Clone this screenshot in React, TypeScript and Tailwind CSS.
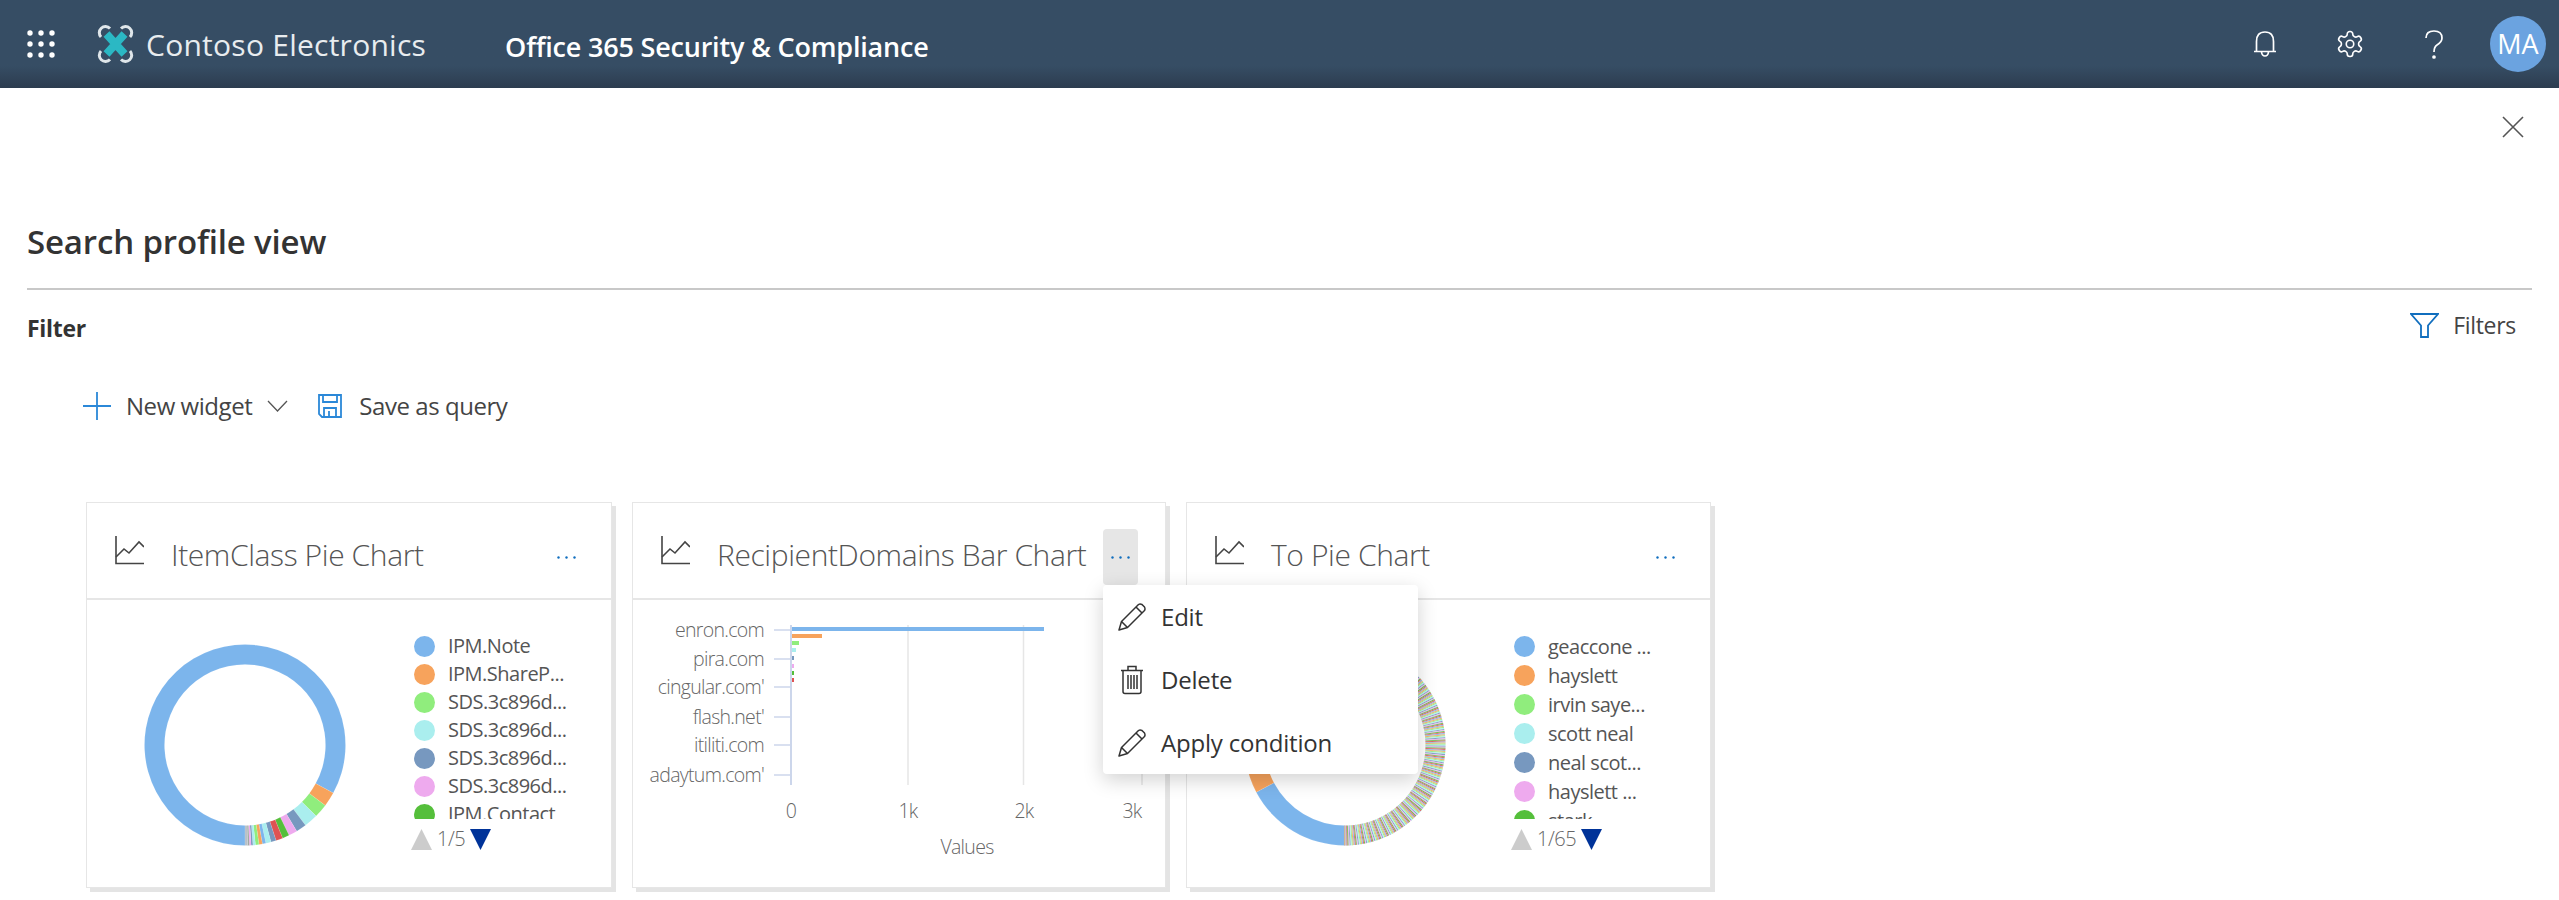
const palette = ["#7cb5ec", "#f7a35c", "#90ed7d", "#aaeeee", "#7798bf", "#eeaaee", "#55bf3b", "#df5353"]

function polar(cx: number, cy: number, r: number, deg: number) {
  const a = ((deg - 90) * Math.PI) / 180
  return [cx + r * Math.cos(a), cy + r * Math.sin(a)]
}

function slicePath(from: number, to: number) {
  const [x1, y1] = polar(101, 101, 100.5, from)
  const [x2, y2] = polar(101, 101, 100.5, to)
  const [x3, y3] = polar(101, 101, 80.5, to)
  const [x4, y4] = polar(101, 101, 80.5, from)
  const large = to - from > 180 ? 1 : 0
  return `M${x1} ${y1}A100.5 100.5 0 ${large} 1 ${x2} ${y2}L${x3} ${y3}A80.5 80.5 0 ${large} 0 ${x4} ${y4}Z`
}

type Slice = { from: number; to: number; color: string }

const itemClassSlices: Slice[] = [
  { from: 180, to: 478.6, color: "#7cb5ec" },
  { from: 478.6, to: 487, color: "#f7a35c" },
  { from: 487, to: 495, color: "#90ed7d" },
  { from: 495, to: 503, color: "#aaeeee" },
  { from: 503, to: 509, color: "#7798bf" },
  { from: 509, to: 514, color: "#eeaaee" },
  { from: 514, to: 518, color: "#55bf3b" },
  { from: 518, to: 522, color: "#df5353" },
  { from: 522, to: 525, color: "#7798bf" },
  { from: 525, to: 528, color: "#aaeeee" },
  { from: 528, to: 530, color: "#7cb5ec" },
  { from: 530, to: 532, color: "#f7a35c" },
  { from: 532, to: 534, color: "#90ed7d" },
  { from: 534, to: 535.5, color: "#aaeeee" },
  { from: 535.5, to: 536.5, color: "#7798bf" },
  { from: 536.5, to: 537.5, color: "#eeaaee" },
  { from: 537.5, to: 538.5, color: "#a0a8a0" },
  { from: 538.5, to: 540, color: "#b8c0c8" },
]

const toSlices: Slice[] = [
  { from: 180, to: 242, color: "#7cb5ec" },
  { from: 242, to: 262, color: "#f7a35c" },
]
for (let i = 0; i < 278 / 0.6; i++) {
  const from = 262 + i * 0.6
  toSlices.push({ from, to: from + 0.6, color: palette[(i + 2) % palette.length] })
}

function Donut({ slices }: { slices: Slice[] }) {
  return (
    <svg width="202" height="202" viewBox="0 0 202 202" className="shrink-0">
      {slices.map((s, i) => (
        <path key={i} d={slicePath(s.from, s.to)} fill={s.color} stroke="#ffffff" strokeWidth="0.1" />
      ))}
    </svg>
  )
}

function ChartIcon() {
  return (
    <svg width="29" height="29" viewBox="0 0 29 29" fill="none" stroke="#444444" strokeWidth="1.6" className="shrink-0">
      <path d="M1 0V27.5H29" />
      <path d="M1 21L9 13L14 17L24 6L29 11" />
    </svg>
  )
}

function Pencil() {
  return (
    <svg width="28" height="28" viewBox="0 0 28 28" fill="none" stroke="#333333" strokeWidth="1.5" strokeLinejoin="round" className="shrink-0">
      <path d="M1 27L3.5 18.5L20.5 1.5Q22 0.5 24 1.5L26.5 4Q27.5 6 26.5 7.5L9.5 24.5Z" />
      <path d="M3.5 18.5L9.5 24.5M18 4L24 10" />
    </svg>
  )
}

function Trash() {
  return (
    <svg width="28" height="30" viewBox="0 0 28 30" fill="none" stroke="#333333" strokeWidth="1.5" className="shrink-0">
      <path d="M3 5.5H25M10 5V1.5H18V5M5 6V26.5Q5 28.5 7 28.5H21Q23 28.5 23 26.5V6" />
      <path d="M10 10V24M13 10V24M16 10V24M19 10V24" />
    </svg>
  )
}

function Ellipsis() {
  return (
    <svg width="19" height="3" viewBox="0 0 19 3" fill="#106ebe">
      <circle cx="1.5" cy="1.5" r="1.2" />
      <circle cx="9.5" cy="1.5" r="1.2" />
      <circle cx="17.5" cy="1.5" r="1.2" />
    </svg>
  )
}

function CardHeader({ title, active }: { title: string; active?: boolean }) {
  return (
    <div className="flex h-[97px] items-center border-b-2 border-[#e6e6e6] pl-[28px]">
      <ChartIcon />
      <div className="ml-[27px] mt-[8px] flex-1 text-[30px] font-light tracking-[-0.4px] whitespace-nowrap text-[#555555]">{title}</div>
      <div className={"mr-[27px] mt-[13px] flex h-[56px] w-[35px] items-center justify-center rounded-sm " + (active ? "bg-[#e6e6e6]" : "")}>
        <Ellipsis />
      </div>
    </div>
  )
}

function Legend({ items, pager, pitch }: { items: string[]; pager: string; pitch: string }) {
  return (
    <div className="flex flex-col">
      <div className="h-[184px] overflow-hidden">
        <div className="-mt-[3px]">
          {items.map((t, i) => (
            <div key={t} className={"flex items-center gap-[13px] " + pitch}>
              <span className="h-[21px] w-[21px] shrink-0 rounded-full" style={{ backgroundColor: palette[i] }} />
              <span className="text-[20px] tracking-[-0.5px] whitespace-nowrap text-[#555555]">{t}</span>
            </div>
          ))}
        </div>
      </div>
      <div className="-ml-[3px] mt-[5px] flex items-center gap-[5px] text-[20px] font-light text-[#666666]">
        <svg width="21" height="21" viewBox="0 0 21 21"><path d="M10.5 0L21 21H0Z" fill="#cccccc" /></svg>
        <span className="tracking-[-0.5px]">{pager}</span>
        <svg width="21" height="21" viewBox="0 0 21 21"><path d="M0 0H21L10.5 21Z" fill="#003399" /></svg>
      </div>
    </div>
  )
}

function PieCard({ title, slices, items, pager, pitch, width }: { title: string; slices: Slice[]; items: string[]; pager: string; pitch: string; width: string }) {
  return (
    <div className={"h-[386px] border border-[#e6e6e6] bg-white shadow-[4px_4px_0_#e4e4e4] " + width}>
      <CardHeader title={title} />
      <div className="flex items-start pl-[57px] pt-[35px]">
        <div className="mt-[9px]">
          <Donut slices={slices} />
        </div>
        <div className="ml-[68px]">
          <Legend items={items} pager={pager} pitch={pitch} />
        </div>
      </div>
    </div>
  )
}

const domains = [
  { label: "enron.com", y: 631 },
  { label: "pira.com", y: 660 },
  { label: "cingular.com'", y: 688 },
  { label: "flash.net'", y: 718 },
  { label: "itiliti.com", y: 746 },
  { label: "adaytum.com'", y: 776 },
]

const bars = [
  { y: 628, w: 252, c: "#7cb5ec" },
  { y: 635, w: 30, c: "#f7a35c" },
  { y: 642, w: 7, c: "#90ed7d" },
  { y: 649, w: 4, c: "#aaeeee" },
  { y: 657, w: 2, c: "#7798bf" },
  { y: 665, w: 2, c: "#eeaaee" },
  { y: 672, w: 2, c: "#55bf3b" },
  { y: 679, w: 2, c: "#df5353" },
]

function BarChart() {
  return (
    <svg width="534" height="288" viewBox="632 601 534 288" className="block" fontFamily="'Open Sans', sans-serif" fontWeight="300" fontSize="19.5" fill="#666666" letterSpacing="-0.7">
      {[907, 1022.5, 1141].map((x) => (
        <line key={x} x1={x} x2={x} y1="626" y2="786" stroke="#e6e6e6" strokeWidth="1.5" />
      ))}
      <line x1="790" x2="790" y1="626" y2="786" stroke="#ccd6eb" strokeWidth="2" />
      {domains.map((d) => (
        <g key={d.label}>
          <line x1="773" x2="790" y1={d.y} y2={d.y} stroke="#ccd6eb" strokeWidth="1.5" />
          <text x="763" y={d.y + 7} textAnchor="end">{d.label}</text>
        </g>
      ))}
      {bars.map((b) => (
        <rect key={b.y} x="791" y={b.y} width={b.w} height="4" fill={b.c} />
      ))}
      <text x="790" y="819" textAnchor="middle">0</text>
      <text x="907" y="819" textAnchor="middle">1k</text>
      <text x="1023" y="819" textAnchor="middle">2k</text>
      <text x="1131" y="819" textAnchor="middle">3k</text>
      <text x="966" y="855" textAnchor="middle">Values</text>
    </svg>
  )
}

function MenuItem({ icon, label }: { icon: React.ReactNode; label: string }) {
  return (
    <div className="flex h-[63px] items-center gap-[15px] pl-[15px] text-[24px] tracking-[-0.2px] text-[#333333]">
      {icon}
      <span>{label}</span>
    </div>
  )
}

export default function App() {
  return (
    <div className="h-[900px] w-[2559px] overflow-hidden bg-white font-['Open_Sans',sans-serif] text-[#333333]">
      <header className="flex h-[88px] items-center bg-gradient-to-b from-[#364d64] from-75% to-[#2c3c4f] text-white">
        <svg width="28" height="28" viewBox="0 0 28 28" fill="#ffffff" className="ml-[27px]">
          {[3, 14, 25].flatMap((y) => [3, 14, 25].map((x) => <circle key={`${x}-${y}`} cx={x} cy={y} r="2.7" />))}
        </svg>
        <svg width="37" height="38" viewBox="0 0 37 38" fill="none" className="ml-[42px]">
          <g stroke="#dfe6ea" strokeWidth="3">
            <path d="M4 12A6 6 0 1 1 13 3.5" />
            <path d="M33 12A6 6 0 1 0 24 3.5" />
            <path d="M4 26A6 6 0 1 0 13 34.5" />
            <path d="M33 26A6 6 0 1 1 24 34.5" />
          </g>
          <path d="M9.5 9L27.5 29M27.5 9L9.5 29" stroke="#2bb8c4" strokeWidth="8" />
        </svg>
        <div className="ml-[12px] text-[30px] font-medium tracking-[0.25px] text-[#e8ecef] whitespace-nowrap">Contoso Electronics</div>
        <div className="ml-[79px] mt-[6px] text-[27px] font-semibold tracking-[-0.2px] whitespace-nowrap">Office 365 Security &amp; Compliance</div>
        <div className="ml-auto flex items-center">
          <svg width="24" height="26" viewBox="0 0 24 26" fill="none" stroke="#ffffff" strokeWidth="1.7" className="mr-[58px]">
            <path d="M1 20.5H23M3.5 20.5V10.5Q3.5 1 12 1Q20.5 1 20.5 10.5V20.5M8.5 21Q9 25 12 25Q15 25 15.5 21" />
          </svg>
          <svg width="30" height="30" viewBox="0 0 24 24" fill="none" stroke="#ffffff" strokeWidth="1.3" strokeLinecap="round" strokeLinejoin="round" className="mr-[60px]">
            <path d="M12.22 2h-.44a2 2 0 0 0-2 2v.18a2 2 0 0 1-1 1.73l-.43.25a2 2 0 0 1-2 0l-.15-.08a2 2 0 0 0-2.73.73l-.22.38a2 2 0 0 0 .73 2.73l.15.1a2 2 0 0 1 1 1.72v.51a2 2 0 0 1-1 1.74l-.15.09a2 2 0 0 0-.73 2.73l.22.38a2 2 0 0 0 2.73.73l.15-.08a2 2 0 0 1 2 0l.43.25a2 2 0 0 1 1 1.73V20a2 2 0 0 0 2 2h.44a2 2 0 0 0 2-2v-.18a2 2 0 0 1 1-1.73l.43-.25a2 2 0 0 1 2 0l.15.08a2 2 0 0 0 2.73-.73l.22-.39a2 2 0 0 0-.73-2.73l-.15-.08a2 2 0 0 1-1-1.74v-.5a2 2 0 0 1 1-1.74l.15-.09a2 2 0 0 0 .73-2.73l-.22-.38a2 2 0 0 0-2.73-.73l-.15.08a2 2 0 0 1-2 0l-.43-.25a2 2 0 0 1-1-1.73V4a2 2 0 0 0-2-2z" />
            <circle cx="12" cy="12" r="3" />
          </svg>
          <svg width="18" height="29" viewBox="0 0 18 29" fill="none" stroke="#ffffff" strokeWidth="1.7" className="mr-[47px]">
            <path d="M1 8Q1 1 9 1Q17 1 17 8Q17 12 12 15Q9 17 9 22" />
            <circle cx="9" cy="27" r="1" fill="#ffffff" />
          </svg>
          <div className="mr-[13px] flex h-[56px] w-[56px] items-center justify-center rounded-full bg-[#6ba3e0] text-[27px] text-white">MA</div>
        </div>
      </header>

      <main className="relative px-[27px]">
        <div className="flex h-[50px] items-end justify-end pr-[8px]">
          <svg width="22" height="22" viewBox="0 0 22 22" stroke="#555555" strokeWidth="1.6">
            <path d="M1 1L21 21M21 1L1 21" />
          </svg>
        </div>
        <h1 className="mt-[83px] text-[33px] font-semibold leading-[42px] tracking-[-0.15px] text-[#333333]">Search profile view</h1>
        <div className="mt-[25px] h-[2px] w-[2505px] bg-[#c8c8c8]" />
        <div className="mt-[20px] flex h-[36px] items-center justify-between">
          <div className="text-[23px] font-bold tracking-[-0.3px]">Filter</div>
          <div className="-mt-[6px] flex items-center gap-[14px] pr-[16px]">
            <svg width="29" height="25" viewBox="0 0 29 25" fill="none" stroke="#106ebe" strokeWidth="1.8">
              <path d="M1 1H28L18 12.5V24H11V12.5Z" />
            </svg>
            <span className="text-[23px] tracking-[-0.3px] text-[#444444]">Filters</span>
          </div>
        </div>
        <div className="ml-[56px] mt-[42px] flex h-[36px] items-center text-[24px] tracking-[-0.45px] text-[#444444]">
          <svg width="28" height="28" viewBox="0 0 28 28" stroke="#2b88d8" strokeWidth="1.8">
            <path d="M14 0V28M0 14H28" />
          </svg>
          <span className="ml-[15px]">New widget</span>
          <svg width="21" height="12" viewBox="0 0 21 12" fill="none" stroke="#555555" strokeWidth="1.3" className="ml-[15px]">
            <path d="M1 1L10.5 11L20 1" />
          </svg>
          <svg width="24" height="24" viewBox="0 0 24 24" fill="none" stroke="#2b88d8" strokeWidth="1.8" className="ml-[30px]">
            <path d="M1 1H23V23H4L1 20Z" />
            <path d="M5 1V8H19V1M6 23V14H18V23M11 17V23" />
          </svg>
          <span className="ml-[17px]">Save as query</span>
        </div>

        <div className="ml-[59px] mt-[78px] flex gap-[20px]">
          <PieCard
            title="ItemClass Pie Chart"
            slices={itemClassSlices}
            items={["IPM.Note", "IPM.ShareP...", "SDS.3c896d...", "SDS.3c896d...", "SDS.3c896d...", "SDS.3c896d...", "IPM.Contact"]}
            pager="1/5"
            pitch="h-[28px]"
            width="w-[526px]"
          />
          <div className="relative h-[386px] w-[534px] border border-[#e6e6e6] bg-white shadow-[4px_4px_0_#e4e4e4]">
            <CardHeader title="RecipientDomains Bar Chart" active />
            <BarChart />
            <div className="absolute left-[470px] top-[82px] z-10 h-[189px] w-[315px] rounded-sm bg-white shadow-[0_6px_20px_rgba(0,0,0,0.18)]">
              <MenuItem icon={<Pencil />} label="Edit" />
              <MenuItem icon={<Trash />} label="Delete" />
              <MenuItem icon={<Pencil />} label="Apply condition" />
            </div>
          </div>
          <PieCard
            title="To Pie Chart"
            slices={toSlices}
            items={["geaccone ...", "hayslett", "irvin saye...", "scott neal", "neal scot...", "hayslett ...", "stark"]}
            pager="1/65"
            pitch="h-[29px]"
            width="w-[525px]"
          />
        </div>
      </main>
    </div>
  )
}
